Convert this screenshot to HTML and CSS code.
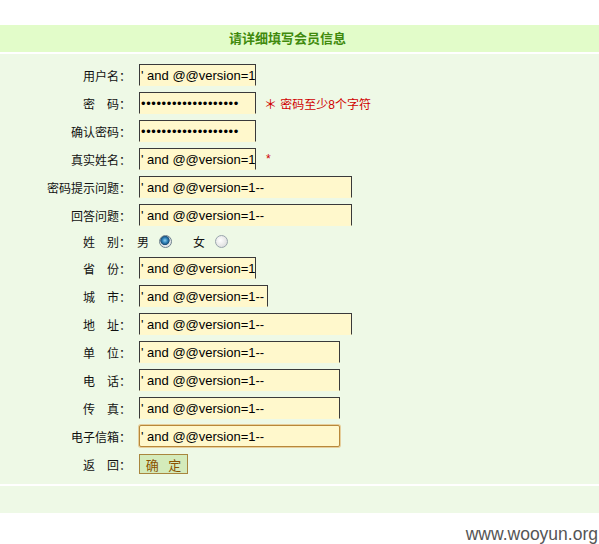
FILE: index.html
```html
<!DOCTYPE html>
<html lang="zh-CN">

<head>
  <meta charset="UTF-8" />
  <meta name="viewport" content="width=device-width, initial-scale=1.0" />
  <title>会员信息</title>
  <link rel="stylesheet" href="styles.css">
</head>

<body>
  <div class="head">请详细填写会员信息</div>

  <form class="info">
    <div class="row">
      <label>用户名：</label>
      <div class="field"><input class="txt s" type="text" value="' and @@version=1--"></div>
    </div>
    <div class="row">
      <label>密　码：</label>
      <div class="field">
        <input class="txt s pw" type="password" value="' and @@version=1--">
        <span class="tip"><b>＊</b> 密码至少8个字符</span>
      </div>
    </div>
    <div class="row">
      <label>确认密码：</label>
      <div class="field"><input class="txt s pw" type="password" value="' and @@version=1--"></div>
    </div>
    <div class="row">
      <label>真实姓名：</label>
      <div class="field">
        <input class="txt s" type="text" value="' and @@version=1--">
        <span class="star">*</span>
      </div>
    </div>
    <div class="row">
      <label>密码提示问题：</label>
      <div class="field"><input class="txt l" type="text" value="' and @@version=1--"></div>
    </div>
    <div class="row">
      <label>回答问题：</label>
      <div class="field"><input class="txt l" type="text" value="' and @@version=1--"></div>
    </div>
    <div class="row sex">
      <label>姓　别：</label>
      <div class="field">
        <span class="boy">男</span><input class="radio" type="radio" name="sex" checked>
        <span class="girl">女</span><input class="radio" type="radio" name="sex">
      </div>
    </div>
    <div class="row">
      <label>省　份：</label>
      <div class="field"><input class="txt s" type="text" value="' and @@version=1--"></div>
    </div>
    <div class="row">
      <label>城　市：</label>
      <div class="field"><input class="txt city" type="text" value="' and @@version=1--"></div>
    </div>
    <div class="row">
      <label>地　址：</label>
      <div class="field"><input class="txt l" type="text" value="' and @@version=1--"></div>
    </div>
    <div class="row">
      <label>单　位：</label>
      <div class="field"><input class="txt m" type="text" value="' and @@version=1--"></div>
    </div>
    <div class="row">
      <label>电　话：</label>
      <div class="field"><input class="txt m" type="text" value="' and @@version=1--"></div>
    </div>
    <div class="row">
      <label>传　真：</label>
      <div class="field"><input class="txt m" type="text" value="' and @@version=1--"></div>
    </div>
    <div class="row">
      <label>电子信箱：</label>
      <div class="field"><input class="txt m on" type="text" value="' and @@version=1--" autofocus></div>
    </div>
    <div class="row">
      <label>返　回：</label>
      <div class="field"><button class="btn" type="button">确 定</button></div>
    </div>
  </form>

  <div class="foot"></div>

  <div class="mark">www.wooyun.org</div>
</body>

</html>
```

FILE: styles.css
```css
* {
  margin: 0;
  padding: 0;
}

body {
  padding-top: 25px;
  font: 12px "Liberation Sans", "Noto Sans CJK SC", sans-serif;
  color: #111;
  background: #fff;
}

.head {
  height: 27px;
  line-height: 27px;
  margin-bottom: 2px;
  padding-right: 24px;
  background: #e2fcc9;
  text-align: center;
  font-size: 13px;
  font-weight: bold;
  color: #3f8a0c;
}

.info {
  padding: 7px 0 6px;
  margin-bottom: 2px;
  background: #eef9e6;
}

.row {
  display: grid;
  grid-template-columns: 131px 1fr;
  column-gap: 8px;
  align-items: center;
  height: 28px;
}

.row.sex {
  height: 25px;
}

.row label {
  text-align: right;
  white-space: nowrap;
}

.field {
  display: flex;
  align-items: center;
}

.txt {
  box-sizing: border-box;
  height: 22px;
  width: 117px;
  padding: 0 0 0 1px;
  border: 1px solid #3a3a3a;
  border-bottom-color: #fff8cc;
  background: #fff8cc;
  font: 13px "Liberation Sans", sans-serif;
  color: #000;
  outline: none;
}

.txt.pw {
  letter-spacing: 0.6px;
}

.txt.l {
  width: 213px;
}

.txt.m {
  width: 201px;
}

.txt.city {
  width: 129px;
}

.txt.on {
  border: 1px solid #b8883a;
  border-radius: 2px;
  box-shadow: 0 0 0 1px #e6cf9c;
}

.tip {
  margin-left: 8px;
  color: #d00000;
}

.tip b {
  font-weight: normal;
  font-size: 13px;
}

.star {
  margin-left: 10px;
  color: #d00000;
}

.boy {
  margin-left: -2px;
}

.radio {
  appearance: none;
  -webkit-appearance: none;
  width: 13px;
  height: 13px;
  margin: 0 0 0 10px;
  border: 1px solid #9aa5ad;
  border-radius: 50%;
  background: radial-gradient(circle at 40% 40%, #fff 0, #e8e8e8 55%, #cfd3d6 100%);
  box-sizing: border-box;
}

.radio:checked {
  border-color: #6d7f8c;
  background: radial-gradient(circle at 45% 40%, #8fd0f0 0, #2b7db5 30%, #1b4f78 48%, #dfe3e6 56%, #f4f4f4 100%);
}

.girl {
  margin-left: 21px;
}

.btn {
  width: 49px;
  height: 20px;
  border: 1px solid #a8863e;
  background: #d4ebbb;
  color: #8a5200;
  font: 13px "Liberation Sans", "Noto Sans CJK SC", sans-serif;
  letter-spacing: 3px;
  text-indent: 3px;
}

.foot {
  height: 27px;
  background: #eef9e6;
}

.mark {
  margin-top: 11px;
  padding-right: 1px;
  text-align: right;
  font: 17.5px "Liberation Sans", sans-serif;
  line-height: 20px;
  color: #555;
}
```
